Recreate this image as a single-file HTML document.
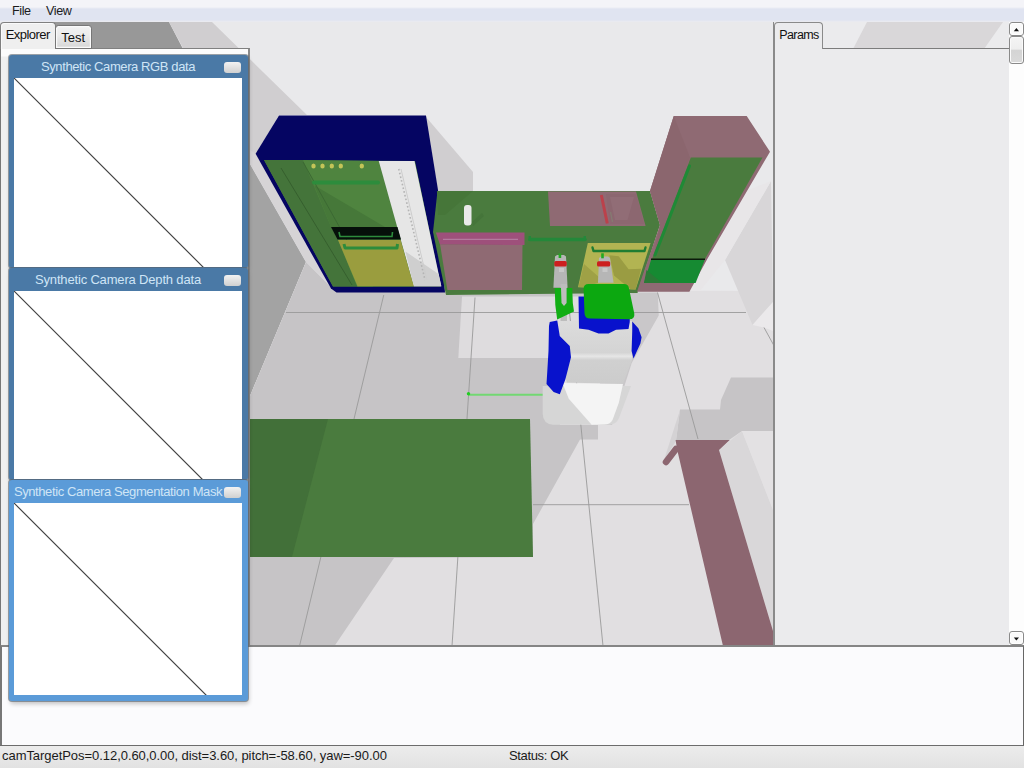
<!DOCTYPE html>
<html><head><meta charset="utf-8"><title>Simulator</title>
<style>
html,body{margin:0;padding:0;}
body{width:1024px;height:768px;position:relative;overflow:hidden;background:#e9e9eb;font-family:"Liberation Sans",sans-serif;font-size:13px;color:#111;}
div,span,svg{position:absolute;box-sizing:border-box;}
#menubar{left:0;top:0;width:1024px;height:22px;background:linear-gradient(#f4f4f8 0,#f4f4f8 7px,#e0e4f1 9px,#e0e4f1 20px,#ececf0 22px);}
#menubar span{top:4px;white-space:nowrap;letter-spacing:-0.4px;font-size:12.6px;color:#1c1c1c;}
#scene{left:0;top:22px;filter:blur(0.45px);}
#sceneBorder{left:773px;top:22px;width:2px;height:624px;background:#8a8a8a;}
#explorer{left:0;top:47.5px;width:250px;height:600px;background:linear-gradient(#fcfcfc 0,#fcfcfc 7px,#f0f0f0 8px);border-left:1.2px solid #777;border-top:1.2px solid #808080;border-right:2px solid #8a8a8a;}
.tab{white-space:nowrap;text-align:center;}
#tabExplorer{left:0;top:22px;width:55.5px;height:27px;background:#efefef;border:1.2px solid #808080;border-bottom:none;border-radius:4px 4px 0 0;padding-top:4px;letter-spacing:-0.55px;box-shadow:inset 1px 1px 0 0 #fafafa;}
#tabTest{left:55px;top:24.5px;width:36.5px;height:24px;background:linear-gradient(#f2f2f2,#ececec 40%,#d6d6d6);border:1.2px solid #777;border-radius:3.5px 3.5px 0 0;padding-top:4px;box-shadow:inset 0 0 0 1.2px #fafafa;}
.win{left:9px;width:238.5px;background:#4a79a6;border-radius:3px;box-shadow:0 0 0 1px rgba(90,100,110,0.6),1px 3px 4px rgba(0,0,0,0.22);}
.win .title{left:0;top:0;width:218px;height:23px;color:#cfe5f6;text-align:center;white-space:nowrap;letter-spacing:-0.4px;padding-top:4px;}
.win .content{left:4.6px;top:23px;right:5.6px;bottom:0.5px;background:#fff;overflow:hidden;}
.win .min{right:6.5px;top:7px;width:17px;height:11px;border-radius:3px;background:linear-gradient(#f2f2f2,#d0d0d0);}
.win.active{background:#5b9bd8;}
.win.active .content{bottom:5.5px;}
#log{left:0;top:645px;width:1024px;height:101px;background:#fbfbfd;border-top:2px solid #858585;border-left:2px solid #777;border-right:1.3px solid #666;}
#status{left:0;top:745px;width:1024px;height:23px;background:linear-gradient(#ececec,#e2e2e2);border-top:1.5px solid #6c6c6c;}
#status span{top:2px;white-space:nowrap;letter-spacing:-0.05px;color:#1a1a1a;}
#params{left:774px;top:22px;width:250px;height:624px;background:#ebebed;}
#paramsBody{left:0;top:25.6px;width:235px;height:599px;background:#ebebed;border-top:1.5px solid #7c7c7c;border-left:1.5px solid #8a8a8a;}
#tabParams{left:0;top:0;width:49px;height:27.2px;background:#ebebed;border:1.5px solid #8a8a8a;border-bottom:none;border-radius:4px 4px 0 0;padding-top:4.5px;padding-left:1px;letter-spacing:-0.6px;font-size:12.5px;}
#sbTrack{left:235px;top:0;width:15px;height:624px;background:#fdfdfd;}
.sbBtn{left:235px;width:15px;height:14px;background:#fafafa;border:1.2px solid #8a8a8a;border-radius:3px;box-shadow:inset 0 0 0 1px #fff;}
#sbThumb{left:235px;top:14.4px;width:15px;height:27.6px;border:1.2px solid #8a8a8a;border-radius:3px;background:linear-gradient(#f4f4f4 0,#eeeeee 46%,#d4d4d4 52%,#dadada);box-shadow:inset 0 0 0 1px #fafafa;}
</style></head><body>
<div id="menubar"><span style="left:12px">File</span><span style="left:46px">View</span></div>
<svg id="scene" width="776" height="624" viewBox="0 22 776 624">
<rect x="0" y="22" width="776" height="624" fill="#e9e9eb"/>
<!-- wall: dark part behind explorer & shadows -->
<polygon points="0,22 169,22 182,48 250,165 250,22" fill="none"/>
<polygon points="40,22 169,22 183,49 40,49" fill="#989898"/>
<polygon points="169,22 212,22 307,115 279,115 256,154 250,164 250,48 183,48" fill="#d0ced0"/>
<!-- left wall (dark) -->
<polygon points="250,164 306,262 250,396" fill="#a3a3a3"/>
<!-- strip between wall and cabinet -->
<polygon points="250,150 256,154 333,288 306,262 250,164" fill="#d6d4d6"/>
<!-- shadow of blue cabinet on back wall -->
<polygon points="426,117 473,172 473,191 437,191" fill="#d0ced0"/>
<!-- floor -->
<polygon points="250,396 306,262 333,289 775,291 775,646 250,646" fill="#e1dfe1"/>
<polygon points="250,396 306,262 333,289 600,292 600,358 560,358 560,425 598,425 598,439.4 580,439.4 533,524 533,557 394,558 334.5,646 250,646" fill="#c6c4c6"/>
<polygon points="462,296.6 600,296.6 600,358 458.3,358" fill="#dedcde"/>
<!-- robot shadow right -->
<polygon points="634.8,292.5 657.7,292.5 658.75,315.4 631.7,363 621,396.7 612,425 600,425 600,300" fill="#c9c7c9"/>
<!-- right-side shapes -->
<polygon points="771,181 725,260 752.5,325 773,302" fill="#d8d6d8"/>
<polygon points="725,260 700,291 690,291 748,190 771,181" fill="#e8e6e8"/>
<polygon points="721,400 775,400 775,431 742,431 729,440 676,440 680,409.5 720,409.5" fill="#c6c4c6"/>
<polygon points="731,377.5 775,377.5 775,400 721,400" fill="#c6c4c6"/>
<polygon points="680,410 676,441 664,460" fill="#d4d2d4"/>
<polygon points="752.5,325 773,302 773,331 764,327.5" fill="#ebe9eb"/>
<!-- white box -->
<polygon points="719,450 742,431 775,515 775,646 773,631" fill="#d9d7d9"/>
<polygon points="742,431 775,431 775,515" fill="#e3e1e3"/>
<!-- tile lines -->
<g stroke="#9a9a9a" stroke-width="0.9" fill="none">
<line x1="286" y1="312.5" x2="746" y2="312.5"/>
<line x1="383.75" y1="295" x2="299.5" y2="646"/>
<line x1="475" y1="297.5" x2="452" y2="646"/>
<line x1="568" y1="297" x2="603" y2="646"/>
<line x1="657.5" y1="292.5" x2="698" y2="439"/>
<line x1="764" y1="327.5" x2="775" y2="347.5"/>
<line x1="533" y1="504.7" x2="689" y2="504.7"/>
</g>
<!-- green line on floor -->
<line x1="468" y1="394.8" x2="543" y2="394.8" stroke="#72d872" stroke-width="2"/>
<circle cx="468.5" cy="393.8" r="1.7" fill="#22cc22"/>
<!-- green table -->
<polygon points="250,419 530,419 533,557 250,557" fill="#4a7b3e"/>
<polygon points="250,419 328,419 292,557 250,557" fill="#427039"/>
<!-- pink bar -->
<polygon points="675.6,440 729.7,440 719,450 773,631 775,646 723,646 677,449" fill="#8c6670"/>
<line x1="676" y1="449" x2="666" y2="462" stroke="#8c6670" stroke-width="6.5" stroke-linecap="round"/>
<!-- ===== blue cabinet ===== -->
<polygon points="279,115.5 426,115.5 438,190 445,292.4 336.5,292.5 331,288.5 255.6,153.75" fill="#050562"/>
<!-- front face -->
<polygon points="264,160 415,161 441,286.5 333,286.5" fill="#4a7b3e"/>
<!-- left door darker -->
<polygon points="264,160 303,160 373,286.5 333,286.5" fill="#44743a"/>
<polygon points="303,160 378.5,161 413.5,286.5 357,286.5 338,240 331,227 " fill="#4f843f"/>
<polygon points="308,170 313.7,185 385,227 331,227" fill="#467839"/>
<polyline points="281,168 352,285" stroke="#365f2e" stroke-width="1" fill="none"/>
<polyline points="303,162 372,285" stroke="#3c6933" stroke-width="1" fill="none"/>
<!-- white panel -->
<polygon points="378.75,161 414.5,161 441.3,286.3 413.75,286.3" fill="#e6e6e6"/>
<polygon points="405.5,251.5 438.5,274 441.3,286.3 413.75,286.3" fill="#cfcfcf"/>
<line x1="401" y1="169" x2="427" y2="280" stroke="#cdcdcd" stroke-width="1"/>
<line x1="398.75" y1="169" x2="425" y2="280" stroke="#b4b4b4" stroke-width="1.6" stroke-dasharray="1.6,2.2"/>
<!-- yellow knobs -->
<g fill="#c4c458"><ellipse cx="313.5" cy="166" rx="2.2" ry="2.6"/><ellipse cx="322.5" cy="166" rx="2.2" ry="2.6"/><ellipse cx="331.8" cy="166" rx="2.2" ry="2.6"/><ellipse cx="340.8" cy="166" rx="2.2" ry="2.6"/><ellipse cx="361.8" cy="166" rx="2.2" ry="2.6"/></g>
<!-- handle 1 -->
<line x1="314" y1="182.5" x2="378" y2="182.5" stroke="#2d8c3c" stroke-width="4" stroke-linecap="round"/>
<!-- black window -->
<polygon points="331,227 397.5,227 401,239.5 337.5,239.5" fill="#06100a"/>
<polyline points="339,232 340,236.5 392,236.5 392.5,232" stroke="#2d8c3c" stroke-width="1.6" fill="none"/>
<!-- olive drawer -->
<polygon points="338,240 400.5,240 413.75,286.3 357.5,286.3" fill="#9a9d3e"/>
<polyline points="344,244 345,248 397,248 397.5,244" stroke="#2d8c3c" stroke-width="3" fill="none" stroke-linejoin="round"/>
<!-- ===== counter ===== -->
<polygon points="437.5,191 650,191 660,225 637.5,293 446,295 433,232" fill="#4a7b3e"/>
<!-- shadow on counter from blue cabinet -->
<polygon points="437,191 473,191 445,215 438,215" fill="#467639"/>
<!-- bottle -->
<rect x="464" y="205" width="7.5" height="20.5" rx="3" fill="#e9e9e9"/>
<polygon points="472,222 482,213 484,216 473,226" fill="#45753a"/>
<!-- sink -->
<polygon points="548,191.5 636,191.5 645.6,226 550,226" fill="#8f6a73"/>
<polygon points="606,194 636,194 644,224 610,224" fill="#8c6770"/>
<polygon points="610,197 634,197 627.5,220 615,220" fill="#916d76"/>
<line x1="601.3" y1="195" x2="607.3" y2="223.5" stroke="#bb414b" stroke-width="3"/>
<line x1="610.5" y1="212" x2="612.5" y2="222" stroke="#857a72" stroke-width="1.3"/>
<!-- dishwasher -->
<polygon points="435.9,232.5 524.5,232.5 524.5,245 440,244.7" fill="#9e507b"/>
<line x1="443" y1="239.4" x2="518" y2="239.4" stroke="#b47a9e" stroke-width="1.2"/>
<polygon points="440.1,244.5 522.5,245 522,290 447.4,290" fill="#8f6a73"/>
<!-- handle -->
<line x1="530" y1="239.5" x2="585" y2="239.5" stroke="#24883a" stroke-width="3.6" stroke-linecap="round"/>
<rect x="528.5" y="236" width="2.5" height="5" fill="#24883a"/><rect x="583.5" y="236" width="2.5" height="5" fill="#24883a"/>
<!-- olive drawer -->
<polygon points="587.8,243 650.6,243 635.6,289.6 578,287.2" fill="#b2b452"/>
<polygon points="609.4,255.2 618.7,256.2 628.6,269.3 641.2,268.8 635.6,289.4 630.5,289.2 614,275.4" fill="#9a9c42"/>
<polygon points="584,264 598,276.3 598,283 584,287 578.5,287" fill="#9fa146"/>
<polyline points="592.5,247.5 593.5,251 644.5,251 645.5,247.5" stroke="#1f7d32" stroke-width="2.4" fill="none" stroke-linejoin="round" stroke-linecap="round"/>
<!-- ===== pink tall cabinet ===== -->
<polygon points="673.75,116 746.7,116 770,151.7 707.3,259 689.4,291.7 637,291.7 660,225 650,191" fill="#8f6a73"/>
<polygon points="673.75,116 690,157.5 653,258 660,225 650,191" fill="#8b666e"/>
<!-- green door -->
<polygon points="690.8,157.5 762.5,157.5 705,259 652,259" fill="#4a7b3e"/>
<line x1="689.5" y1="166" x2="655" y2="255" stroke="#1f8a36" stroke-width="3" stroke-linecap="round"/>
<line x1="651" y1="259.3" x2="705" y2="259.3" stroke="#0a1a0a" stroke-width="1.4"/>
<polygon points="651,260 704.7,260 695.6,283 644,283" fill="#168a32"/>
<polygon points="646.5,270 662,283 644,283" fill="#2b7a36"/>
<!-- ===== robot ===== -->
<!-- grippers -->
<polygon points="555,256.5 557,255 564,255 566,256.5 567.6,287.8 553.4,287.8" fill="#b6b6b6"/>
<rect x="554.3" y="261" width="12.4" height="5.5" rx="1.5" fill="#cc1f1f"/>
<polygon points="599,258 601,256.6 608,256.6 610,258 613.6,282.8 598,282.8" fill="#b6b6b6"/>
<rect x="597" y="261.2" width="13.2" height="5.4" rx="1.5" fill="#cc1f1f"/>
<rect x="558.6" y="253.5" width="2.6" height="4.5" fill="#22aa22"/>
<rect x="601.2" y="253.3" width="2.6" height="5" fill="#22aa22"/>
<rect x="559" y="268" width="5" height="4" fill="#c8c8c8"/>
<rect x="602.5" y="268" width="5" height="4" fill="#c8c8c8"/>
<!-- green forearm -->
<rect x="560.5" y="284" width="6.5" height="48" fill="#bdbdbd"/>
<polygon points="554.75,287.9 561,287.9 561.5,303 564,306 566.6,303 566.6,287.9 572.25,287.9 572.8,303 574,311.5 557.2,319.5 555.3,305" fill="#12ae14"/>
<!-- base -->
<path d="M542.7,386 L631,386 L619,418 Q616,424.8 609,424.8 L553,424.8 Q543,424 542.7,414 Z" fill="#d6d6d6"/>
<!-- body -->
<defs><linearGradient id="bodyG" x1="0" y1="321" x2="0" y2="384" gradientUnits="userSpaceOnUse"><stop offset="0" stop-color="#dcdcdc"/><stop offset="0.5" stop-color="#d4d4d4"/><stop offset="0.56" stop-color="#e6e6e6"/><stop offset="0.62" stop-color="#d0d0d0"/><stop offset="1" stop-color="#cccccc"/></linearGradient></defs>
<polygon points="556,321 632,321 632,360 623,384 566.9,382.5 560,360" fill="url(#bodyG)"/>
<path d="M562.5,383 L623,384 L618.75,403 L612.5,420 Q610,424.5 604,424.6 L591.7,424.8 L568.75,398.75 Z" fill="#f4f4f4"/>
<!-- arms -->
<polygon points="549.75,322 557.25,320.4 559.75,336 569.75,346 571,357.25 567.25,372 565.3,379.4 559.8,394.2 553.6,391.9 546.5,384 547.25,372 548.5,351 549,326" fill="#0812cc"/>
<polygon points="632.25,321.6 638.5,328.5 641.6,337.25 640.4,343.5 633.5,358.5 631.6,351 632.25,331" fill="#0812cc"/>
<!-- chest blue -->
<polygon points="578.5,296.6 629.75,296.6 629.75,322 628.5,329 616,329.75 608.5,333.5 598.5,333.5 588.5,329.75 579,328.5" fill="#0812cc"/>
<!-- head -->
<path d="M588.5,284 L624,284 Q628.3,284 628.9,288 L634.3,313.5 Q635,319.5 629,319.3 L590,318.6 Q584.6,318.6 584.5,313 L583.6,289 Q583.6,284 588.5,284 Z" fill="#0ca810"/>
</svg>
<div id="sceneBorder"></div>
<div id="explorer"></div>
<div id="tabExplorer" class="tab">Explorer</div>
<div id="tabTest" class="tab">Test</div>
<div id="params">
<svg width="250" height="27" style="left:0;top:0"><polygon points="93,0 229,0 210,27 79,27" fill="#d9d7d9"/></svg>
<div id="paramsBody"></div>
<div id="tabParams" class="tab">Params</div>
<div id="sbTrack"></div>
<div class="sbBtn" style="top:0"><svg width="14" height="14" style="left:0;top:0"><polygon points="3.8,8.2 9,8.2 6.4,5" fill="#111"/></svg></div>
<div id="sbThumb"></div>
<div class="sbBtn" style="top:608.8px;height:14.6px"><svg width="14" height="14" style="left:0;top:0"><polygon points="3.8,5.4 9,5.4 6.4,8.4" fill="#111"/></svg></div>
</div>
<div id="log"></div>
<div id="status"><span style="left:2px">camTargetPos=0.12,0.60,0.00, dist=3.60, pitch=-58.60, yaw=-90.00</span><span style="left:509px;letter-spacing:-0.35px">Status: OK</span></div>
<div class="win" style="top:55.4px;height:212.2px"><div class="title">Synthetic Camera RGB data</div><div class="min"></div><div class="content"><svg width="230" height="190" style="left:0;top:0"><line x1="0" y1="0" x2="190" y2="190" stroke="#404040" stroke-width="1.15"/></svg></div></div>
<div class="win" style="top:267.6px;height:212px"><div class="title" style="letter-spacing:-0.17px">Synthetic Camera Depth data</div><div class="min"></div><div class="content"><svg width="230" height="190" style="left:0;top:0"><line x1="0" y1="0" x2="190" y2="190" stroke="#404040" stroke-width="1.15"/></svg></div></div>
<div class="win active" style="top:479.6px;height:221px"><div class="title">Synthetic Camera Segmentation Mask</div><div class="min"></div><div class="content"><svg width="230" height="200" style="left:0;top:0"><line x1="0" y1="0" x2="200" y2="200" stroke="#404040" stroke-width="1.15"/></svg></div></div>
</body></html>
